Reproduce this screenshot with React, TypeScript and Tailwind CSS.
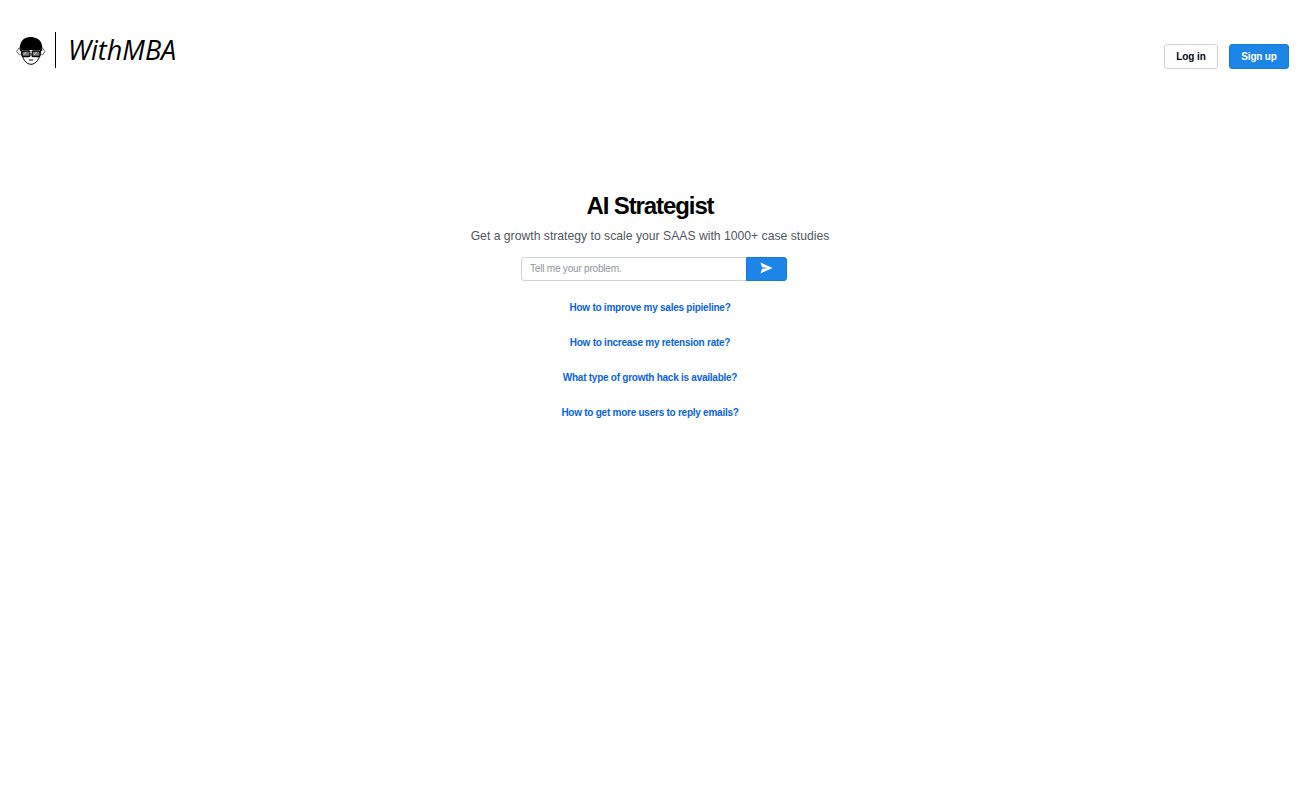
const questions = [
  'How to improve my sales pipieline?',
  'How to increase my retension rate?',
  'What type of growth hack is available?',
  'How to get more users to reply emails?',
];

function Mascot() {
  return (
    <svg width="30" height="30" viewBox="0 0 30 30" fill="none">
      {/* face */}
      <path d="M5.500 15c0 8.500 4.500 14.300 9.500 14.300S24.500 23.500 24.500 15" fill="#fff" stroke="#000" strokeWidth="1" />
      {/* hair */}
      <path d="M4 16.500C2.500 8 7 2 14.500 2c2.500 0 3.500.5 5 1 4.500 1 8 6 6.500 13.500-1-1-2-1.500-3.500-1.500H7.500C6 15 5 15.500 4 16.500z" fill="#000" />
      {/* glasses */}
      <rect x="6" y="16" width="8" height="5.500" rx="1.200" fill="#777" stroke="#000" strokeWidth="1.300" />
      <rect x="16" y="16" width="8" height="5.500" rx="1.200" fill="#777" stroke="#000" strokeWidth="1.300" />
      <path d="M14 17.500h2M7.500 20l2.500-3M18 20l2.500-3" stroke="#fff" strokeWidth="0.600" />
      <path d="M5.500 14L3 13 .5 16.500l3 3.500 2-1.500M24.500 14l2-1 2.500 3.500-2.500 3.500-2-1.500" stroke="#444" strokeWidth="0.800" />
      {/* mouth */}
      <path d="M13 25h4" stroke="#000" strokeWidth="1" />
    </svg>
  );
}

export default function App() {
  return (
    <div className="min-h-[788px] bg-white font-['Liberation_Sans',Arial,sans-serif]">
      {/* Header */}
      <header className="flex items-start justify-between pl-4 pr-[11px] pt-8">
        <div className="flex items-center h-9">
          <Mascot />
          <div className="w-px h-9 bg-black ml-[9px] mr-3" />
          <span className="font-['Open_Sans',sans-serif] italic text-[27px] leading-none text-black -mt-0.5">WithMBA</span>
        </div>
        <div className="flex items-center gap-[11px] mt-3">
          <button className="w-[54px] h-[25px] bg-white border border-[#ced4da] rounded-[3px] text-[10px] tracking-[-0.05px] font-bold text-[#000814]">Log in</button>
          <button className="w-[60px] h-[25px] bg-[#1e85e8] border border-[#1a7ad8] rounded-[3px] text-[10px] tracking-[-0.2px] font-bold text-white">Sign up</button>
        </div>
      </header>

      {/* Main */}
      <main className="flex flex-col items-center pt-[120px]">
        <h1 className="text-[24px] leading-[34px] font-bold tracking-[-1.1px] text-black">AI Strategist</h1>
        <p className="mt-1 text-[12.2px] leading-[18px] text-[#50575f]">Get a growth strategy to scale your SAAS with 1000+ case studies</p>
        <div className="flex mt-3 ml-[8px]">
          <input
            placeholder="Tell me your problem."
            className="w-[226px] h-6 px-2 pb-px border border-[#ced4da] rounded-l-[3px] text-[10px] tracking-[-0.2px] text-black outline-none placeholder:text-[#8f959c]"
          />
          <button className="w-[41px] h-6 flex items-center justify-center bg-[#1e85e8] border border-[#1a7ad8] rounded-r-[3px] -ml-px">
            <svg width="13" height="12" viewBox="0 0 13 12" className="-mt-0.5" fill="#fff">
              <path d="M0.500 0.500L12.500 6 0.500 11.500 2 6.800 8 6 2 5.200z" />
            </svg>
          </button>
        </div>
        <div className="flex flex-col items-center mt-[21px] gap-[23px]">
          {questions.map((q) => (
            <a key={q} className="text-[10px] tracking-[-0.25px] leading-3 font-bold text-[#0a64e0]">{q}</a>
          ))}
        </div>
      </main>
    </div>
  );
}
